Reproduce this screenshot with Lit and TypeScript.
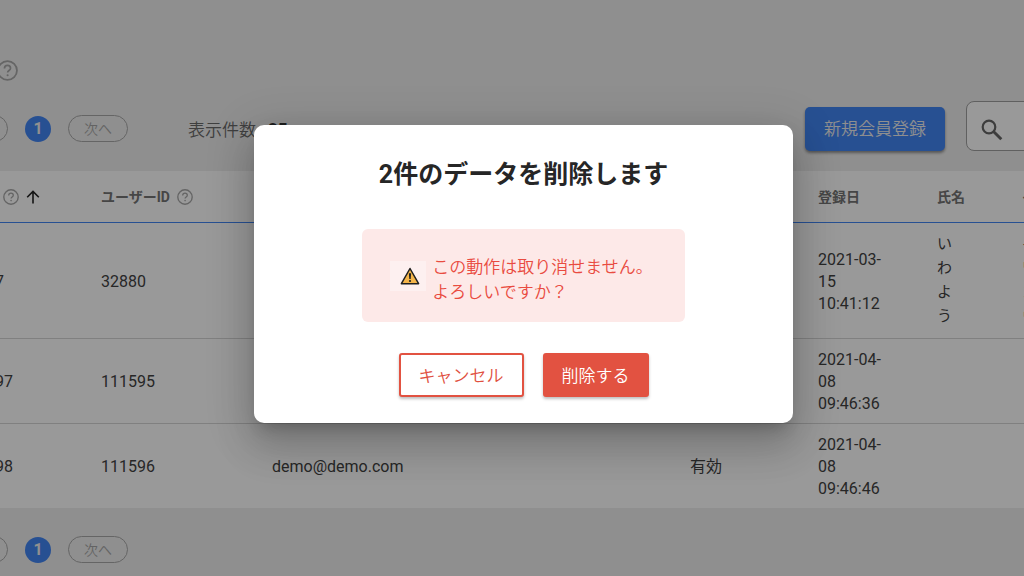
import { LitElement, html, css, svg } from "lit";
import { customElement, state } from "lit/decorators.js";

const help = (size: string) => html`<svg class="help ${size}" viewBox="0 0 20 20" aria-hidden="true">
  ${svg`<circle cx="10" cy="10" r="9" fill="none" stroke="currentColor" stroke-width="1.7" />
  <path d="M7.1 8c0-1.8 1.3-2.9 2.9-2.9S12.9 6.200 12.9 7.800c0 2.100-2.800 2.300-2.800 4.200" fill="none" stroke="currentColor" stroke-width="1.6" />
  <circle cx="10.100" cy="14.500" r="1" fill="currentColor" />`}
</svg>`;

interface Member {
  no: string;
  userId: string;
  mail: string;
  status: string;
  date: string[];
  name: string;
  kana: string;
}

const members: Member[] = [
  { no: "9727", userId: "32880", mail: "", status: "", date: ["2021-03-", "15", "10:41:12"], name: "いわよう", kana: "イワヨウ" },
  { no: "11597", userId: "111595", mail: "", status: "", date: ["2021-04-", "08", "09:46:36"], name: "", kana: "" },
  { no: "11598", userId: "111596", mail: "demo@demo.com", status: "有効", date: ["2021-04-", "08", "09:46:46"], name: "", kana: "" },
];

@customElement("app-pager")
class AppPager extends LitElement {
  static styles = css`
    :host { display: flex; align-items: center; gap: 17px; }
    button {
      box-sizing: border-box;
      height: 27px;
      padding: 0;
      font: 14px/24px Roboto, "Noto Sans CJK JP", sans-serif;
      border-radius: 14px;
    }
    .step { width: 60px; border: 1px solid #a8a8a8; background: transparent; color: #a6a6a6; font-weight: 350; }
    .current { width: 26px; height: 26px; padding-top: 1px; border: 0; background: #4285f4; color: #f0f0f0; font-size: 16px; font-weight: 700; }
  `;
  render() {
    return html`
      <button class="step" disabled>前へ</button>
      <button class="current" aria-current="page">1</button>
      <button class="step" disabled>次へ</button>
    `;
  }
}

@customElement("member-table")
class MemberTable extends LitElement {
  static styles = css`
    :host { display: block; background: #fff; }
    table { width: 100%; border-collapse: separate; border-spacing: 0; table-layout: fixed; }
    .c-no { width: 133px; }
    .c-user { width: 171px; }
    .c-mail { width: 418px; }
    .c-status { width: 128px; }
    .c-date { width: 119px; }
    .c-name { width: 85px; }
    th {
      box-sizing: border-box;
      height: 52px;
      padding: 0 20px;
      text-align: left;
      font-size: 14px;
      line-height: 20px;
      font-weight: 700;
      color: #757575;
      border-bottom: 1px solid #4285f4;
      white-space: nowrap;
    }
    td {
      padding: 10px 20px 8px;
      font-size: 16px;
      line-height: 22px;
      color: #424242;
      border-bottom: 1px solid #d6d6d6;
    }
    td.kana { padding: 9px 20px 10px; font-size: 15px; line-height: 24px; }
    tr:last-child td { border-bottom: 0; }
    .label { display: flex; align-items: center; gap: 7px; }
    .help { width: 16px; height: 16px; color: #a8a8a8; }
    .arrow { width: 14px; height: 14px; color: #222; }
    .line, .char { display: block; }
  `;
  render() {
    return html`<table>
      <colgroup>
        <col class="c-no" /><col class="c-user" /><col class="c-mail" /><col class="c-status" />
        <col class="c-date" /><col class="c-name" /><col />
      </colgroup>
      <thead>
        <tr>
          <th><span class="label">会員 ${help("small")}
            <svg class="arrow" viewBox="0 0 14 14" aria-hidden="true"><path d="M7 13.500V1.500M1.200 7.200 7 1.400l5.800 5.800" fill="none" stroke="currentColor" stroke-width="1.600" /></svg>
          </span></th>
          <th><span class="label">ユーザーID ${help("small")}</span></th>
          <th>メールアドレス</th>
          <th>状態</th>
          <th>登録日</th>
          <th>氏名</th>
          <th>イ</th>
        </tr>
      </thead>
      <tbody>
        ${members.map((m) => html`<tr>
          <td>${m.no}</td>
          <td>${m.userId}</td>
          <td>${m.mail}</td>
          <td>${m.status}</td>
          <td>${m.date.map((part) => html`<span class="line">${part}</span>`)}</td>
          <td class=${m.name ? "kana" : ""}>${[...m.name].map((c) => html`<span class="char">${c}</span>`)}</td>
          <td class=${m.kana ? "kana" : ""}>${[...m.kana].map((c) => html`<span class="char">${c}</span>`)}</td>
        </tr>`)}
      </tbody>
    </table>`;
  }
}

@customElement("delete-dialog")
class DeleteDialog extends LitElement {
  static styles = css`
    :host {
      position: absolute;
      inset: 0;
      display: flex;
      align-items: center;
      justify-content: center;
      padding: 0 0 28px 23px;
      background: rgba(0, 0, 0, 0.4);
    }
    .panel {
      box-sizing: border-box;
      width: 539px;
      max-width: 90%;
      padding: 32px 24px 26px;
      display: flex;
      flex-direction: column;
      align-items: center;
      border-radius: 10px;
      background: #fff;
      box-shadow: 0 11px 15px -7px rgba(0, 0, 0, 0.2), 0 24px 38px 3px rgba(0, 0, 0, 0.14), 0 9px 46px 8px rgba(0, 0, 0, 0.12);
    }
    h2 { margin: 0; font-size: 25px; line-height: 36px; font-weight: 700; color: #262626; }
    .alert {
      display: flex;
      align-items: flex-start;
      gap: 6px;
      margin-top: 36px;
      padding: 26px 32px 17px 28px;
      border-radius: 6px;
      background: #fde9e8;
      color: #e94b40;
    }
    .mark { display: flex; margin-top: 6px; padding: 6px 6px 6px 10px; background: #fdf0f0; }
    .mark svg { width: 20px; height: 18px; }
    p { margin: 0; font-size: 17px; line-height: 25px; font-weight: 350; }
    .line { display: block; }
    .actions { display: flex; gap: 19px; margin-top: 31px; }
    button {
      box-sizing: border-box;
      height: 44px;
      padding: 1px 18px 0;
      font: 350 17px/24px Roboto, "Noto Sans CJK JP", sans-serif;
      border: 2px solid #e25241;
      border-radius: 3px;
      box-shadow: 0 2px 3px rgba(0, 0, 0, 0.25);
    }
    .cancel { background: #fff; color: #e0503f; }
    .delete { padding: 1px 17px 0; background: #e25241; color: #fff; }
  `;
  render() {
    return html`<section class="panel" role="dialog" aria-modal="true" aria-labelledby="title">
      <h2 id="title">2件のデータを削除します</h2>
      <div class="alert" role="alert">
        <span class="mark"><svg viewBox="0 0 20 18" aria-hidden="true">
          <path d="M10 1.500 18.600 16.700H1.400Z" fill="#f5b54a" stroke="#1f1f1f" stroke-width="1.500" stroke-linejoin="round" />
          <path d="M8.900 6.200h2.200l-.4 5.800H9.300Z" fill="#1f1f1f" /><circle cx="10" cy="14" r="1.100" fill="#1f1f1f" />
        </svg></span>
        <p><span class="line">この動作は取り消せません。</span><span class="line">よろしいですか？</span></p>
      </div>
      <div class="actions">
        <button class="cancel" type="button">キャンセル</button>
        <button class="delete" type="button">削除する</button>
      </div>
    </section>`;
  }
}

@customElement("app-root")
class AppRoot extends LitElement {
  @state() private perPage = "25";

  static styles = css`
    :host {
      display: block;
      position: relative;
      min-height: 100vh;
      overflow: hidden;
      background: #efefef;
      font-family: Roboto, "Noto Sans CJK JP", sans-serif;
    }
    .page { margin-left: -52px; margin-right: -80px; }
    .heading { display: flex; justify-content: flex-start; padding: 60px 0 0 49px; }
    .help { width: 21px; height: 21px; color: #a8a8a8; }
    .toolbar { box-sizing: border-box; display: flex; align-items: center; height: 50px; margin: 20px 0; padding-top: 5px; }
    .count { display: flex; align-items: center; gap: 12px; margin-left: 60px; font-size: 17px; font-weight: 350; color: #6a6a6a; }
    select {
      appearance: none;
      border: 0;
      padding: 0;
      background: transparent;
      font: 700 17px/24px Roboto, sans-serif;
      color: #333;
    }
    .tools { display: flex; align-items: center; gap: 21px; margin-left: auto; }
    .add {
      height: 44px;
      padding: 0 19px;
      border: 0;
      border-radius: 5px;
      background: #4285f4;
      color: #efefef;
      font: 350 17px/24px Roboto, "Noto Sans CJK JP", sans-serif;
      box-shadow: 0 2px 3px rgba(0, 0, 0, 0.4);
    }
    .search {
      box-sizing: border-box;
      display: flex;
      align-items: center;
      width: 138px;
      height: 50px;
      margin-top: -5px;
      padding: 8px 14px 0;
      border: 1px solid #a0a0a0;
      border-radius: 8px;
      background: #fff;
    }
    .search svg { flex: none; width: 22px; height: 22px; color: #666; }
    .search input { width: 80px; border: 0; background: transparent; outline: 0; font: inherit; }
    .bottom { padding-top: 28px; }
  `;

  render() {
    return html`
      <main class="page">
        <div class="heading">${help("large")}</div>
        <div class="toolbar">
          <app-pager></app-pager>
          <label class="count">表示件数
            <select .value=${this.perPage}><option>25</option><option>50</option></select>
          </label>
          <div class="tools">
            <button class="add" type="button">新規会員登録</button>
            <label class="search">
              <svg viewBox="0 0 22 22" aria-hidden="true"><circle cx="8" cy="8" r="6.300" fill="none" stroke="currentColor" stroke-width="2.200" /><path d="M12.500 12.500 20.300 20.300" stroke="currentColor" stroke-width="2.900" /></svg>
              <input type="search" aria-label="検索" />
            </label>
          </div>
        </div>
        <member-table></member-table>
        <app-pager class="bottom"></app-pager>
      </main>
      <delete-dialog></delete-dialog>
    `;
  }
}
